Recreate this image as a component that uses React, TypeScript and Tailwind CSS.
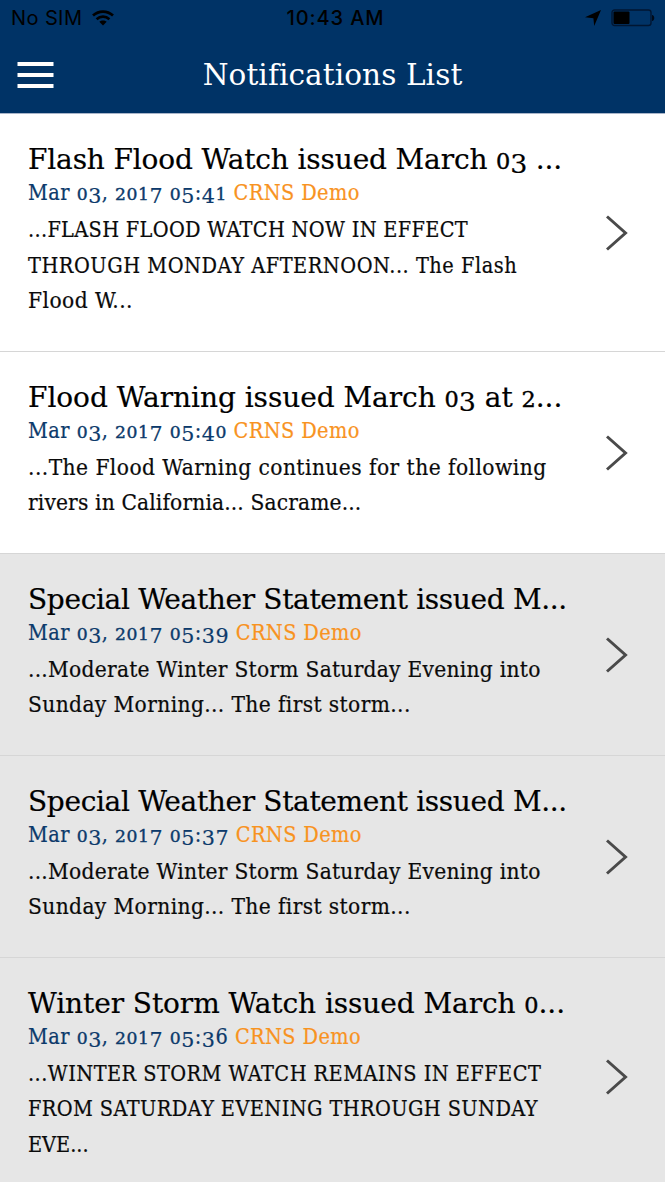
import React from "react";

type Line = { text: string; style: string };

type Notification = {
  title: Line;
  date: string;
  body: Line[];
  read: boolean;
};

const notifications: Notification[] = [
  {
    title: { text: "Flash Flood Watch issued March 03 ...", style: "tracking-[-0.15px]" },
    date: "Mar 03, 2017 05:41",
    body: [
      { text: "...FLASH FLOOD WATCH NOW IN EFFECT", style: "text-[21.5px] tracking-[0.32px]" },
      { text: "THROUGH MONDAY AFTERNOON... The Flash", style: "text-[21.5px] tracking-[0.54px]" },
      { text: "Flood W...", style: "text-[22.5px] tracking-[0.45px]" },
    ],
    read: false,
  },
  {
    title: { text: "Flood Warning issued March 03 at 2...", style: "tracking-[-0.04px]" },
    date: "Mar 03, 2017 05:40",
    body: [
      { text: "...The Flood Warning continues for the following", style: "text-[22.5px] tracking-[0.45px]" },
      { text: "rivers in California... Sacrame...", style: "text-[22.5px] tracking-[0.14px]" },
    ],
    read: false,
  },
  {
    title: { text: "Special Weather Statement issued M...", style: "tracking-[-0.34px]" },
    date: "Mar 03, 2017 05:39",
    body: [
      { text: "...Moderate Winter Storm Saturday Evening into", style: "text-[22.5px] tracking-[0.26px]" },
      { text: "Sunday Morning... The first storm...", style: "text-[22.5px] tracking-[0.38px]" },
    ],
    read: true,
  },
  {
    title: { text: "Special Weather Statement issued M...", style: "tracking-[-0.34px]" },
    date: "Mar 03, 2017 05:37",
    body: [
      { text: "...Moderate Winter Storm Saturday Evening into", style: "text-[22.5px] tracking-[0.26px]" },
      { text: "Sunday Morning... The first storm...", style: "text-[22.5px] tracking-[0.38px]" },
    ],
    read: true,
  },
  {
    title: { text: "Winter Storm Watch issued March 0...", style: "tracking-[-0.08px]" },
    date: "Mar 03, 2017 05:36",
    body: [
      { text: "...WINTER STORM WATCH REMAINS IN EFFECT", style: "text-[21.5px] tracking-[0.46px]" },
      { text: "FROM SATURDAY EVENING THROUGH SUNDAY", style: "text-[21.5px] tracking-[0.41px]" },
      { text: "EVE...", style: "text-[21.5px] tracking-[0px]" },
    ],
    read: true,
  },
];

/** Sets figures in old style: 0-2 at x-height, 3, 4, 5, 7 and 9 below the baseline. */
function OldStyle({ text }: { text: string }) {
  return (
    <>
      {text.split(/([0-2]+|[34579]+)/).map((part, i) => {
        if (/^[0-2]+$/.test(part))
          return <span key={i} className="font-['DejaVu_Serif'] text-[0.8em] leading-none [-webkit-text-stroke:0.4px] [font-stretch:normal]">{part}</span>;
        if (/^[34579]+$/.test(part))
          return <span key={i} className="align-[-0.16em] font-['DejaVu_Serif'] text-[0.96em] leading-none [font-stretch:normal]">{part}</span>;
        return part;
      })}
    </>
  );
}

function StatusBar() {
  return (
    <div className="grid h-9 grid-cols-3 items-center pr-[10px] pl-[11px] font-['Inter'] text-[20px] leading-none text-black">
      <div className="flex items-center gap-[10px]">
        <span className="tracking-[0.4px]">No SIM</span>
        <svg width="22" height="16" viewBox="0 0 22 16" fill="none" stroke="currentColor" strokeWidth="2.7">
          <path d="M1 5.6C6.8.2 15.2.2 21 5.6" />
          <path d="M4.6 9.2c3.7-3.4 9.1-3.4 12.8 0" />
          <path d="M11 15.5 7.3 11.8c2.1-1.9 5.3-1.9 7.4 0z" fill="currentColor" stroke="none" />
        </svg>
      </div>
      <span className="pl-[5px] text-center font-medium tracking-[0.9px] whitespace-nowrap">10:43 AM</span>
      <div className="flex items-center justify-end gap-[10px]">
        <svg width="16" height="16" viewBox="0 0 16 16" fill="currentColor">
          <path d="M16 0 9.2 16 8.4 8.2 0 7.3z" />
        </svg>
        <svg width="44" height="18" viewBox="0 0 44 18">
          <rect x="1" y="1" width="39" height="15.5" rx="2.5" fill="none" stroke="#001632" strokeWidth="1.4" />
          <rect x="2.5" y="2.5" width="16" height="12.5" rx="1" fill="#000" />
          <path d="M41 6c3 0 3 6 0 6z" fill="#000a18" />
        </svg>
      </div>
    </div>
  );
}

function Row({ item }: { item: Notification }) {
  return (
    <li className={`flex items-center border-b border-[#d6d6d6] pt-[29px] pr-[37px] pb-[32px] pl-[28px] ${item.read ? "bg-[#e6e6e6]" : "bg-white"}`}>
      <div className="min-w-0 flex-1 whitespace-nowrap [-webkit-text-stroke:0.2px]">
        <h2 className={`h-[34px] font-['DejaVu_Serif'] text-[28px] leading-[34px] [font-stretch:normal] ${item.title.style}`}>
          <OldStyle text={item.title.text} />
        </h2>
        <p className="h-[35px] text-[21.5px] leading-[31px] tracking-[0.5px] text-[#0c3a6b]">
          <OldStyle text={item.date} />{" "}
          <span className="tracking-[0.4px] text-[#f8931f]">CRNS Demo</span>
        </p>
        {item.body.map((line) => (
          <p key={line.text} className={`h-[35.5px] leading-[35.5px] text-[#0a0a0a] ${line.style}`}>
            {line.text}
          </p>
        ))}
      </div>
      <svg className="mt-[5px]" width="22" height="36" viewBox="0 0 22 36" fill="none" stroke="#4a4a4a" strokeWidth="3">
        <path d="M1 1.5 19.5 18 1 34.5" />
      </svg>
    </li>
  );
}

export default function App() {
  return (
    <div className="flex h-[1182px] w-[665px] flex-col overflow-hidden bg-[#e6e6e6] font-['DejaVu_Serif_Condensed','DejaVu_Serif',serif] [font-stretch:condensed] text-black">
      <header className="h-[114px] shrink-0 border-b border-[#a9b5c9] bg-[#003366]">
        <StatusBar />
        <div className="grid h-[77px] grid-cols-[1fr_auto_1fr] items-center pr-[17px] pl-[17px]">
          <button aria-label="Menu" className="flex w-9 translate-x-[0.5px] flex-col gap-[7px]">
            <span className="h-1 bg-white" />
            <span className="h-1 bg-white" />
            <span className="h-1 bg-white" />
          </button>
          <h1 className="mt-[2px] font-['DejaVu_Serif'] text-[29.5px] leading-none tracking-[0.1px] text-white [font-stretch:normal]">Notifications List</h1>
        </div>
      </header>
      <ul>
        {notifications.map((item) => (
          <Row key={item.date} item={item} />
        ))}
      </ul>
    </div>
  );
}
